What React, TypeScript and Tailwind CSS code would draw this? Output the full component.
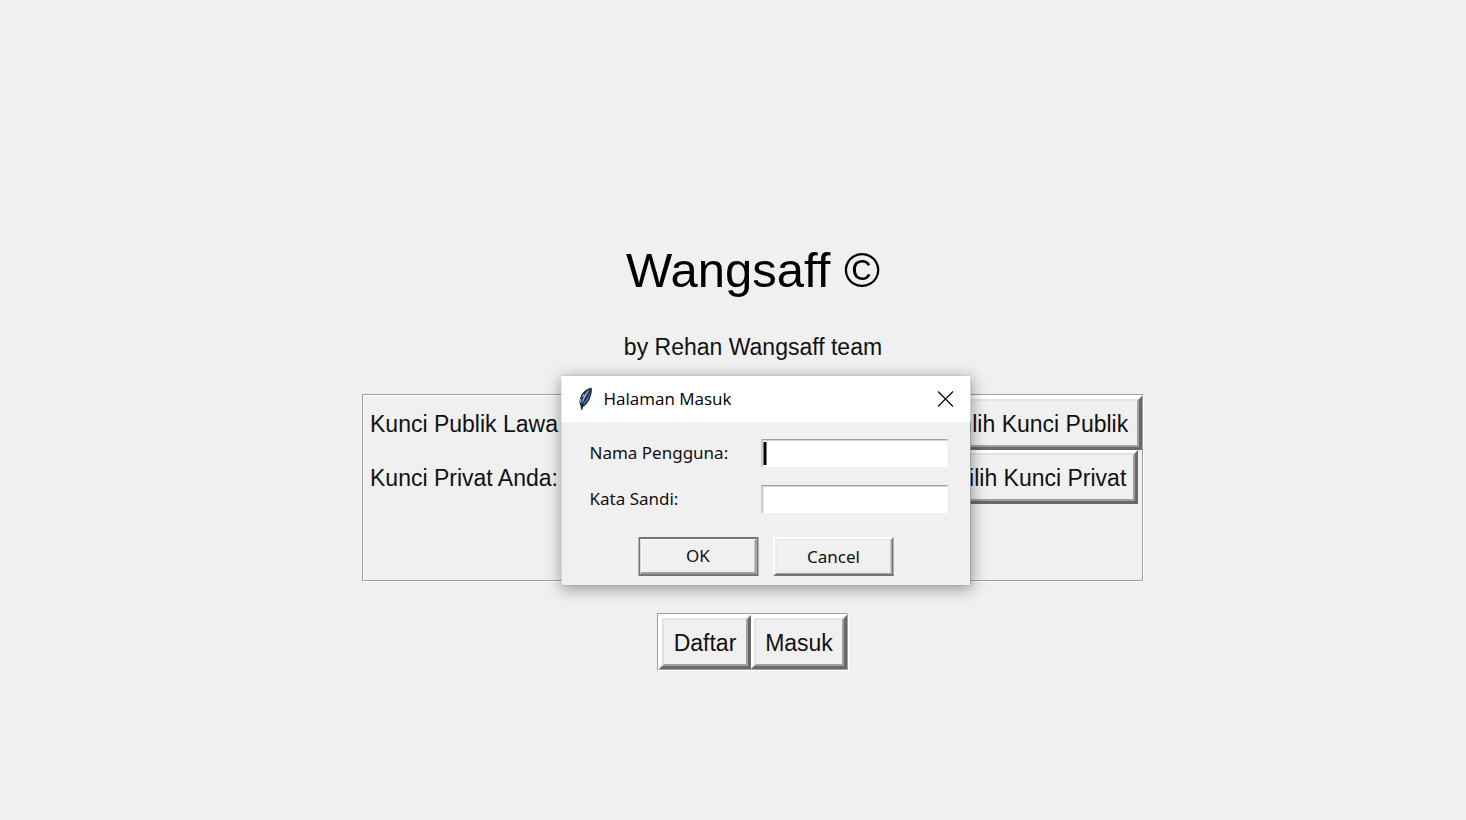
import type { ReactNode } from 'react';

function Groove({ children, className = '' }: { children: ReactNode; className?: string }) {
  return (
    <div className={`border border-t-[#a0a0a0] border-l-[#a0a0a0] border-r-white border-b-white ${className}`}>
      <div className="h-full border border-t-white border-l-white border-r-[#a0a0a0] border-b-[#a0a0a0]">
        {children}
      </div>
    </div>
  );
}

function RaisedButton({ children, className = '' }: { children: ReactNode; className?: string }) {
  return (
    <button
      type="button"
      className={`block h-[54px] border-3 border-t-white border-l-white border-r-[#696969] border-b-[#696969] bg-[#f0f0f0] text-[23px] ${className}`}
    >
      <span className="flex h-full items-center justify-center whitespace-nowrap border-2 border-t-[#e3e3e3] border-l-[#e3e3e3] border-r-[#a0a0a0] border-b-[#a0a0a0] px-2 pt-[2px]">
        {children}
      </span>
    </button>
  );
}

function Feather() {
  return (
    <svg viewBox="0 0 16 24" className="h-6 w-4" aria-hidden="true">
      <path d="M14.2 0.8 C9.500 1.200 4 5.500 2.800 11 L1.800 15 L3 19 L4.200 23.500 L5.500 20 C10.500 17 13.500 11 14.400 4 Z" fill="#1b2638" />
      <path d="M12.7 2 C9 4 6 8 4.500 14 L4 17 C6.500 13 10.500 7 12.700 2 Z" fill="#8fb0dc" />
      <path d="M13.200 3 C12.700 9 9.800 15 6.200 18 L5.200 17 C8.500 13 11.500 8 13.200 3 Z" fill="#4676b8" />
      <path d="M12.500 2.500 C9 8 6 14 4.300 23" fill="none" stroke="#1b2c47" strokeWidth="0.7" />
      <path d="M3.500 12 L3 15.500 M6.500 7 L4.800 10" fill="none" stroke="#b7c8de" strokeWidth="1" />
    </svg>
  );
}

function Field({ id, label, type, focused = false }: { id: string; label: string; type: string; focused?: boolean }) {
  return (
    <div className="flex items-center justify-between">
      <label htmlFor={id} className="text-[17px] leading-7">{label}</label>
      <div className="relative">
        <input
          id={id}
          type={type}
          className="block h-7 w-[186px] border-t border-l border-[#a0a0a0] bg-white px-1 shadow-[inset_1px_1px_0_#d4d4d4] outline-none"
        />
        {focused && <span className="absolute top-[3px] left-[2px] h-[23px] w-[3px] bg-black" />}
      </div>
    </div>
  );
}

function LoginDialog() {
  return (
    <section
      role="dialog"
      aria-labelledby="dialog-title"
      className="absolute -top-[18px] left-1/2 ml-[13px] w-[409px] -translate-x-1/2 bg-[#f0f0f0] font-['Open_Sans','Noto_Sans',sans-serif] shadow-[0_3px_14px_1px_rgba(0,0,0,0.38),0_0_1px_rgba(0,0,0,0.5)]"
    >
      <header className="flex h-[46px] items-center bg-white pr-[17px] pl-4">
        <Feather />
        <h2 id="dialog-title" className="ml-[10px] flex-1 text-[17px] text-black">Halaman Masuk</h2>
        <button type="button" aria-label="Close" className="block">
          <svg viewBox="0 0 16 16" className="size-4" aria-hidden="true">
            <path d="M0.500 0.500 L15.500 15.500 M15.500 0.500 L0.500 15.500" stroke="#000" strokeWidth="1.1" />
          </svg>
        </button>
      </header>
      <form className="pb-[9px]">
        <div className="flex flex-col gap-[18px] pt-[17px] pr-[23px] pl-7 font-['Noto_Sans',sans-serif]">
          <Field id="username" label="Nama Pengguna:" type="text" focused />
          <Field id="password" label="Kata Sandi:" type="password" />
        </div>
        <div className="mt-6 flex justify-center gap-[15px] font-['Noto_Sans',sans-serif] text-[17px]">
          <button type="button" className="h-[39px] w-[120px] border-2 border-[#757575]">
            <span className="flex h-full items-center justify-center border-t border-r-2 border-b-2 border-l border-t-white border-r-[#a0a0a0] border-b-[#a0a0a0] border-l-white">
              OK
            </span>
          </button>
          <button type="button" className="h-[39px] w-[120px] border-2 border-t-white border-r-[#757575] border-b-[#757575] border-l-white">
            <span className="flex h-full items-center justify-center border border-t-[#e3e3e3] border-r-[#a0a0a0] border-b-[#a0a0a0] border-l-[#e3e3e3]">
              Cancel
            </span>
          </button>
        </div>
      </form>
    </section>
  );
}

export default function App() {
  return (
    <main className="flex min-h-screen flex-col items-center bg-[#f0f0f0] pt-[235px] pb-8 pl-10 font-['Liberation_Sans',Arial,sans-serif] text-[#111]">
      <h1 className="text-[49px] leading-[70px] text-black">Wangsaff ©</h1>
      <p className="mt-[26px] text-[23px] leading-8">by Rehan Wangsaff team</p>
      <div className="relative mt-[31px] w-full max-w-[782px]">
        <Groove className="h-[188px]">
          <div className="grid grid-cols-[189px_1fr_204px] items-center pl-[6px] text-[23px]">
            <span className="overflow-hidden pt-[2px] whitespace-nowrap">Kunci Publik Lawan:</span>
            <RaisedButton className="col-start-3 w-[204px]">Pilih Kunci Publik</RaisedButton>
            <span className="overflow-hidden pt-[2px] whitespace-nowrap">Kunci Privat Anda:</span>
            <RaisedButton className="col-start-3 w-[196px] justify-self-center">Pilih Kunci Privat</RaisedButton>
          </div>
        </Groove>
        <LoginDialog />
      </div>
      <Groove className="mt-[31px]">
        <div className="flex">
          <RaisedButton className="w-[92px]">Daftar</RaisedButton>
          <RaisedButton className="w-[96px]">Masuk</RaisedButton>
        </div>
      </Groove>
    </main>
  );
}
